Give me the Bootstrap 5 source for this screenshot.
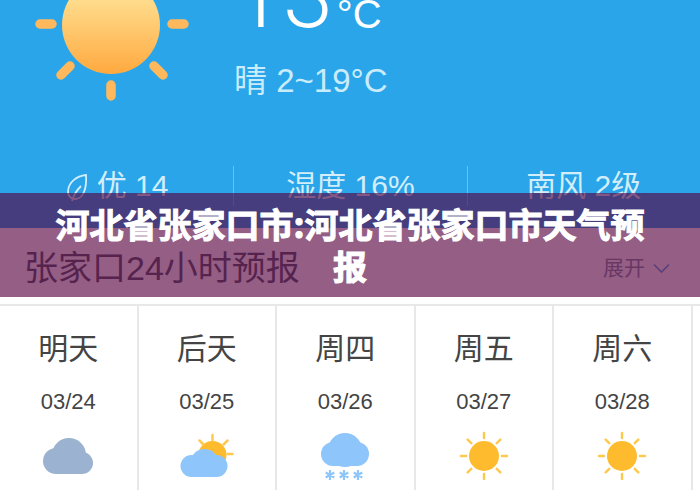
<!DOCTYPE html>
<html lang="zh">
<head>
  <meta charset="UTF-8" />
  <meta name="viewport" content="width=device-width, initial-scale=1" />
  <title>河北省张家口市天气预报</title>
  <link href="https://cdn.jsdelivr.net/npm/bootstrap@5.3.0/dist/css/bootstrap.min.css" rel="stylesheet" />
  <style>
    html, body {
      height: 490px;
      overflow: hidden;
    }
    body {
      background: #fff;
      color: #444;
      font-family: "Liberation Sans", "Noto Sans CJK SC", sans-serif;
    }
    .wx-page {
      position: relative;
      width: 700px;
      height: 490px;
      overflow: hidden;
    }
    .wx-hero {
      height: 228px;
      background: #2aa5e9;
      color: #d3eefb;
    }
    .wx-sun-box {
      width: 234px;
    }
    .wx-temp {
      height: 36px;
      overflow: hidden;
      color: #fff;
    }
    .wx-temp-num {
      display: block;
      margin-top: -48px;
      margin-left: -1px;
      font-family: "Roboto", sans-serif;
      font-weight: 300;
      font-size: 90px;
      line-height: 1;
    }
    .wx-temp-unit {
      font-size: 40px;
      line-height: 1;
      margin-top: -6px;
      margin-left: 4px;
    }
    .wx-desc {
      margin-top: 26px;
      font-size: 33px;
      line-height: 38px;
      color: #c9ecfb;
    }
    .wx-stats {
      height: 40px;
      margin-bottom: 22px;
      font-size: 30px;
      line-height: 40px;
      white-space: nowrap;
    }
    .wx-stat {
      width: 233.3px;
    }
    .wx-stat + .wx-stat {
      border-left: 1px solid #6cc0ef;
    }
    .wx-subhead {
      height: 69px;
      padding: 11px 30px 0 24px;
    }
    .wx-subtitle {
      font-size: 34px;
      color: #555f6a;
      line-height: 1;
    }
    .wx-more {
      font-size: 21px;
      color: #8a95a5;
    }
    .wx-days {
      height: 186px;
      margin-top: 7px;
      border-top: 2px solid #e8e8e8;
    }
    .wx-day {
      flex: 0 0 138.5px;
      border-right: 2px solid #e8e8e8;
      text-align: center;
    }
    .wx-day-name {
      margin-top: 25px;
      font-size: 30px;
      line-height: 36px;
      color: #444;
    }
    .wx-day-date {
      margin-top: 22px;
      font-size: 22px;
      line-height: 26px;
      color: #444;
    }
    .wx-day svg {
      display: block;
      margin: 15px auto 0;
    }
    .wx-banner {
      position: absolute;
      left: 0;
      top: 193px;
      width: 700px;
      height: 104px;
      padding: 10px 50px;
      background: rgba(86, 0, 62, 0.63);
      color: #fff;
      font-family: "Noto Sans CJK SC", sans-serif;
      font-size: 34px;
      font-weight: 700;
      line-height: 42px;
      text-align: center;
      -webkit-text-stroke: 1px #fff;
    }
  </style>
</head>
<body>

<div class="wx-page">
  <section class="wx-hero d-flex flex-column">
    <div class="d-flex">
      <div class="wx-sun-box">
        <svg width="234" height="105" viewBox="0 0 234 105">
          <defs>
            <linearGradient id="sunFill" x1="0" y1="0" x2="0" y2="1">
              <stop offset="0.2" stop-color="#ffdf91" />
              <stop offset="1" stop-color="#ffa93f" />
            </linearGradient>
          </defs>
          <circle cx="111" cy="25" r="49" fill="url(#sunFill)" />
          <g stroke="#ffb95c" stroke-width="9.5" stroke-linecap="round">
            <path d="M40 24h12M172 24h12M111 85v11M61 75l9-9M154 66l9 9" />
          </g>
        </svg>
      </div>
      <div>
        <div class="wx-temp d-flex">
          <span class="wx-temp-num">13</span>
          <span class="wx-temp-unit">°C</span>
        </div>
        <div class="wx-desc">晴 2~19°C</div>
      </div>
    </div>
    <div class="wx-stats d-flex mt-auto">
      <div class="wx-stat d-flex justify-content-center align-items-center gap-2">
        <svg width="24" height="36" viewBox="0 0 24 36" fill="none" stroke="#d3eefb" stroke-width="1.8">
          <path d="M21 7C12 8 3 14 3 24c0 4 3 7 7 7 8 0 12-10 11-24zM7 33c2-7 6-12 9-15" />
        </svg>
        <span>优 14</span>
      </div>
      <div class="wx-stat text-center">湿度 16%</div>
      <div class="wx-stat text-center">南风 2级</div>
    </div>
  </section>

  <div class="wx-subhead d-flex justify-content-between align-items-center">
    <div class="wx-subtitle">张家口24小时预报</div>
    <div class="wx-more d-flex align-items-center gap-2">
      <span>展开</span>
      <svg width="17" height="11" viewBox="0 0 17 11" fill="none" stroke="#6aa8e0" stroke-width="1.6">
        <path d="M1 1.5l7.5 7.5L16 1.5" />
      </svg>
    </div>
  </div>

  <div class="wx-days d-flex">
    <div class="wx-day">
      <div class="wx-day-name">明天</div>
      <div class="wx-day-date">03/24</div>
      <svg width="60" height="50" viewBox="0 0 60 50" fill="#9bb3d0">
        <circle cx="31" cy="25" r="17" /><circle cx="18" cy="31" r="13" /><circle cx="44" cy="33" r="11" />
        <rect x="18" y="31" width="26" height="13" />
      </svg>
    </div>
    <div class="wx-day">
      <div class="wx-day-name">后天</div>
      <div class="wx-day-date">03/25</div>
      <svg width="60" height="50" viewBox="0 0 60 50">
        <circle cx="35.5" cy="25" r="14" fill="#fdbb2d" />
        <path d="M35.5 5v5M22.500 10.500l4 4M50.500 10.500l-4 4M50.500 24h5" stroke="#fdc94f" stroke-width="2.500" stroke-linecap="round" />
        <g fill="#8ec5fb">
          <circle cx="27.500" cy="33" r="14" /><circle cx="14.500" cy="36" r="11" /><circle cx="39.500" cy="36" r="11" />
          <rect x="14.500" y="36" width="25" height="11" />
        </g>
      </svg>
    </div>
    <div class="wx-day">
      <div class="wx-day-name">周四</div>
      <div class="wx-day-date">03/26</div>
      <svg width="60" height="50" viewBox="0 0 60 50">
        <g fill="#8ec5fb">
          <circle cx="30" cy="20" r="17" /><circle cx="18" cy="24" r="12" /><circle cx="42" cy="24" r="12" />
          <rect x="18" y="24" width="24" height="12" />
        </g>
        <path d="M15 40v10M10.700 42.500l8.600 5M19.300 42.500l-8.600 5M29 40v10M24.700 42.500l8.600 5M33.300 42.500l-8.600 5M43 40v10M38.700 42.500l8.600 5M47.300 42.500l-8.600 5" stroke="#8ec5fb" stroke-width="2.200" />
      </svg>
    </div>
    <div class="wx-day">
      <div class="wx-day-name">周五</div>
      <div class="wx-day-date">03/27</div>
      <svg width="60" height="50" viewBox="0 0 60 50">
        <circle cx="30" cy="26" r="15" fill="#fdbb2d" />
        <path d="M30 3v5M30 44v5M7 26h5M48 26h5M13.700 9.700l3.500 3.500M42.800 38.800l3.500 3.500M46.300 9.700l-3.500 3.500M17.200 38.800l-3.500 3.500" stroke="#fdc94f" stroke-width="2.500" stroke-linecap="round" />
      </svg>
    </div>
    <div class="wx-day">
      <div class="wx-day-name">周六</div>
      <div class="wx-day-date">03/28</div>
      <svg width="60" height="50" viewBox="0 0 60 50">
        <circle cx="30" cy="26" r="15" fill="#fdbb2d" />
        <path d="M30 3v5M30 44v5M7 26h5M48 26h5M13.700 9.700l3.500 3.500M42.800 38.800l3.500 3.500M46.300 9.700l-3.500 3.500M17.200 38.800l-3.500 3.500" stroke="#fdc94f" stroke-width="2.500" stroke-linecap="round" />
      </svg>
    </div>
    <div class="wx-day"></div>
  </div>

  <div class="wx-banner">河北省张家口市:河北省张家口市天气预报</div>
</div>

<script src="https://cdn.jsdelivr.net/npm/bootstrap@5.3.0/dist/js/bootstrap.bundle.min.js"></script>
</body>
</html>
